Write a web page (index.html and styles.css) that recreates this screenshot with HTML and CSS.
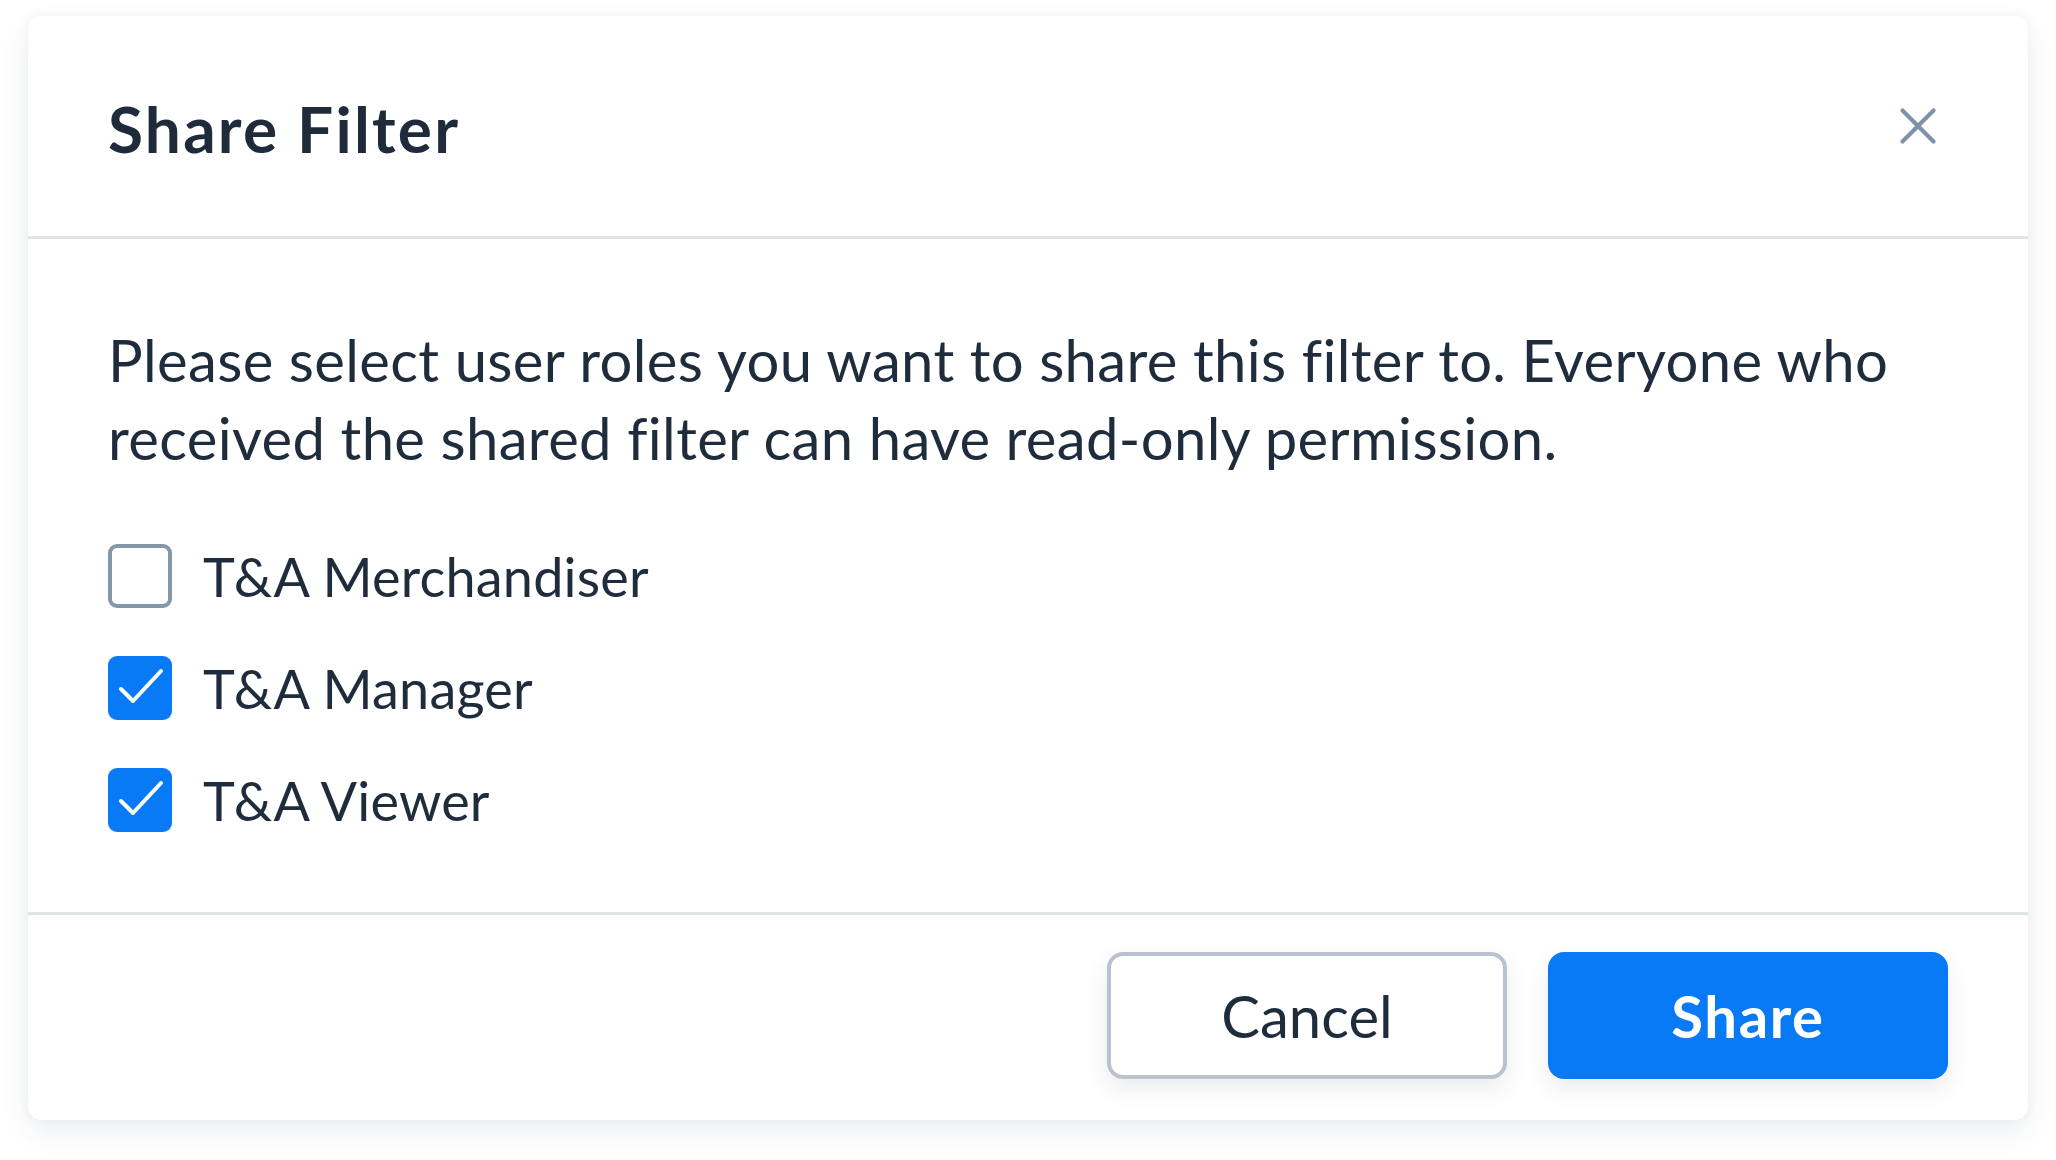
FILE: index.html
```html
<!DOCTYPE html>
<html lang="en">
<head>
<meta charset="utf-8">
<title>Share Filter</title>
<link rel="stylesheet" href="styles.css">
</head>
<body>
<div class="card">
  <div class="header">
    <h1 class="title">Share Filter</h1>
    <button class="close" aria-label="Close">
      <svg width="60" height="60" viewBox="0 0 60 60"><path d="M14.5 14.5 L45.5 45.5 M45.5 14.5 L14.5 45.5" stroke="#7f93a8" stroke-width="4.2" stroke-linecap="round" fill="none"/></svg>
    </button>
  </div>
  <div class="body">
    <p class="desc">Please select user roles you want to share this filter to. Everyone who received the shared filter can have read-only permission.</p>
    <div class="options">
      <label class="option">
        <span class="box"></span>
        <span class="label">T&amp;A Merchandiser</span>
      </label>
      <label class="option">
        <span class="box checked"><svg width="64" height="64" viewBox="0 0 64 64"><polyline points="13,33 25,45 53,15" fill="none" stroke="#fff" stroke-width="4" stroke-linecap="round" stroke-linejoin="round"/></svg></span>
        <span class="label">T&amp;A Manager</span>
      </label>
      <label class="option">
        <span class="box checked"><svg width="64" height="64" viewBox="0 0 64 64"><polyline points="13,33 25,45 53,15" fill="none" stroke="#fff" stroke-width="4" stroke-linecap="round" stroke-linejoin="round"/></svg></span>
        <span class="label">T&amp;A Viewer</span>
      </label>
    </div>
  </div>
  <div class="footer">
    <button class="btn btn-cancel">Cancel</button>
    <button class="btn btn-share">Share</button>
  </div>
</div>
</body>
</html>
```

FILE: styles.css
```css
* { box-sizing: border-box; }
html, body {
  margin: 0;
  padding: 0;
  background: #ffffff;
}
body {
  font-family: "Lato", "Noto Sans", sans-serif;
  color: #1f2c3c;
  width: 2056px;
  height: 1160px;
  overflow: hidden;
}
.card {
  width: 2000px;
  height: 1104px;
  margin: 16px 0 0 28px;
  background: #ffffff;
  border-radius: 14px;
  box-shadow: 0 12px 30px rgba(30, 45, 80, 0.08), 0 0 14px rgba(30, 45, 80, 0.04);
  display: flex;
  flex-direction: column;
  overflow: hidden;
}
.header {
  height: 223px;
  padding: 4px 80px 0 80px;
  border-bottom: 3px solid #dfe3ea;
  display: flex;
  align-items: center;
  justify-content: space-between;
}
.title {
  margin: 0;
  font-size: 64px;
  font-weight: 700;
  color: #1f2b3a;
  letter-spacing: 2.2px;
}
.close {
  width: 60px;
  height: 60px;
  padding: 0;
  margin: -4px 0 0 0;
  border: none;
  background: transparent;
  display: flex;
}
.body {
  padding: 82px 80px 80px 80px;
  display: flex;
  flex-direction: column;
}
.desc {
  margin: 0 0 67px 0;
  font-size: 58px;
  line-height: 78px;
  letter-spacing: 0.35px;
}
.options {
  display: flex;
  flex-direction: column;
  gap: 48px;
}
.option {
  height: 64px;
  display: flex;
  align-items: center;
  gap: 31px;
}
.box {
  width: 64px;
  height: 64px;
  border: 4px solid #8497ab;
  border-radius: 9px;
  flex: none;
  display: flex;
}
.box.checked {
  border: none;
  background: #087af5;
}
.label {
  font-size: 54px;
  letter-spacing: 0.2px;
}
.footer {
  flex: 1;
  border-top: 3px solid #dfe3ea;
  padding: 37px 80px 41px 80px;
  display: flex;
  justify-content: flex-end;
  align-items: flex-start;
  gap: 41px;
}
.btn {
  width: 400px;
  height: 127px;
  border-radius: 16px;
  font-family: "Lato", "Noto Sans", sans-serif;
  font-size: 58px;
  box-shadow: 0 10px 24px rgba(30, 45, 80, 0.09);
  padding: 0;
}
.btn-cancel {
  background: #ffffff;
  border: 4px solid #b9c2cd;
  color: #1f2c3c;
}
.btn-share {
  background: #087af5;
  border: none;
  color: #ffffff;
  font-weight: 700;
  letter-spacing: 1.6px;
}
```
